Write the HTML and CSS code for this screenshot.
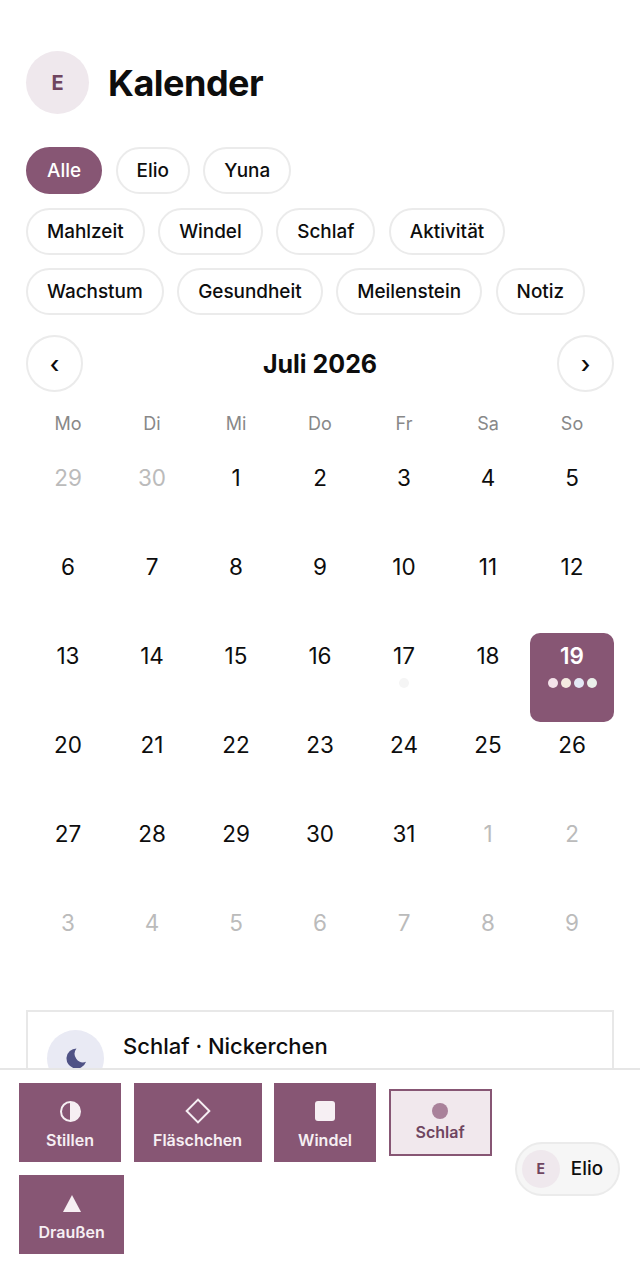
FILE: index.html
```html
<!DOCTYPE html>
<html lang="de">
<head>
    <meta charset="utf-8">
    <title>Kalender</title>
    <link rel="stylesheet" href="styles.css">
</head>
<body>
    <div class="app">
        <main class="content">
            <header class="page-header">
                <div class="avatar">E</div>
                <h1>Kalender</h1>
            </header>

            <div class="chips">
                <button class="chip active">Alle</button>
                <button class="chip">Elio</button>
                <button class="chip">Yuna</button>
            </div>
            <div class="chips">
                <button class="chip">Mahlzeit</button>
                <button class="chip">Windel</button>
                <button class="chip">Schlaf</button>
                <button class="chip">Aktivität</button>
            </div>
            <div class="chips">
                <button class="chip">Wachstum</button>
                <button class="chip">Gesundheit</button>
                <button class="chip">Meilenstein</button>
                <button class="chip">Notiz</button>
            </div>

            <div class="month-nav">
                <button class="nav-btn">‹</button>
                <h2>Juli 2026</h2>
                <button class="nav-btn">›</button>
            </div>

            <div class="weekdays">
                <span>Mo</span><span>Di</span><span>Mi</span><span>Do</span><span>Fr</span><span>Sa</span><span>So</span>
            </div>

            <div class="calendar">
                <div class="day muted">29</div>
                <div class="day muted">30</div>
                <div class="day">1</div>
                <div class="day">2</div>
                <div class="day">3</div>
                <div class="day">4</div>
                <div class="day">5</div>
                <div class="day">6</div>
                <div class="day">7</div>
                <div class="day">8</div>
                <div class="day">9</div>
                <div class="day">10</div>
                <div class="day">11</div>
                <div class="day">12</div>
                <div class="day">13</div>
                <div class="day">14</div>
                <div class="day">15</div>
                <div class="day">16</div>
                <div class="day">17<div class="dots"><i class="dot faint"></i></div></div>
                <div class="day">18</div>
                <div class="day selected">19
                    <div class="dots">
                        <i class="dot pink"></i><i class="dot sand"></i><i class="dot blue"></i><i class="dot green"></i>
                    </div>
                </div>
                <div class="day">20</div>
                <div class="day">21</div>
                <div class="day">22</div>
                <div class="day">23</div>
                <div class="day">24</div>
                <div class="day">25</div>
                <div class="day">26</div>
                <div class="day">27</div>
                <div class="day">28</div>
                <div class="day">29</div>
                <div class="day">30</div>
                <div class="day">31</div>
                <div class="day muted">1</div>
                <div class="day muted">2</div>
                <div class="day muted">3</div>
                <div class="day muted">4</div>
                <div class="day muted">5</div>
                <div class="day muted">6</div>
                <div class="day muted">7</div>
                <div class="day muted">8</div>
                <div class="day muted">9</div>
            </div>

            <section class="entry">
                <div class="entry-icon">
                    <svg width="23" height="23" viewBox="0 0 24 24"><path d="M13 1.5A10.5 10.5 0 1 0 23 15.5 9 9 0 0 1 13 1.5Z" fill="#4f5285"/></svg>
                </div>
                <div class="entry-title">Schlaf · Nickerchen</div>
            </section>
        </main>

        <footer class="quick-bar">
            <div class="tiles">
                <button class="tile">
                    <span class="tile-icon"><i class="ico-half"></i></span>
                    Stillen
                </button>
                <button class="tile">
                    <span class="tile-icon"><i class="ico-diamond"></i></span>
                    Fläschchen
                </button>
                <button class="tile">
                    <span class="tile-icon"><i class="ico-square"></i></span>
                    Windel
                </button>
                <button class="tile running">
                    <span class="tile-icon"><i class="ico-circle"></i></span>
                    Schlaf
                </button>
                <button class="tile">
                    <span class="tile-icon"><i class="ico-triangle"></i></span>
                    Draußen
                </button>
            </div>
            <button class="child-switch">
                <span class="avatar small">E</span>
                Elio
            </button>
        </footer>
    </div>
</body>
</html>
```

FILE: styles.css
```css
html, body {
    margin: 0;
    height: 100%;
    background: #fff;
    font-family: Inter, "Liberation Sans", sans-serif;
    color: #0d0d0d;
}
button {
    font-family: inherit;
    color: inherit;
    cursor: pointer;
}
.app {
    height: 100vh;
    display: flex;
    flex-direction: column;
    overflow: hidden;
}
.content {
    flex: 1;
    min-height: 0;
    overflow: hidden;
    padding: 51px 26px 0;
}
.page-header {
    display: flex;
    align-items: center;
    gap: 19px;
    margin-bottom: 33px;
}
h1 {
    margin: 0;
    font-size: 36px;
    font-weight: 700;
    letter-spacing: -0.5px;
}
.avatar {
    width: 63px;
    height: 63px;
    border-radius: 50%;
    background: #efe8ed;
    color: #6f4560;
    font-size: 20px;
    font-weight: 700;
    display: flex;
    align-items: center;
    justify-content: center;
    flex-shrink: 0;
}
.avatar.small {
    width: 38px;
    height: 38px;
    font-size: 14px;
}
.chips {
    display: flex;
    gap: 13.5px;
    margin-bottom: 13.5px;
}
.chip {
    height: 47px;
    padding: 0 19px;
    background: #fff;
    border: 2px solid #ebebeb;
    border-radius: 24px;
    font-size: 18.9px;
    font-weight: 500;
}
.chip.active {
    background: #875674;
    border-color: #875674;
    color: #fff;
}
.month-nav {
    display: flex;
    align-items: center;
    justify-content: space-between;
    margin-top: 20px;
}
.month-nav h2 {
    margin: 0;
    font-size: 25px;
    font-weight: 700;
}
.nav-btn {
    width: 57px;
    height: 57px;
    background: #fff;
    border: 2px solid #ebebeb;
    border-radius: 50%;
    font-size: 24px;
    font-weight: 500;
    padding: 2px 0 0;
}
.weekdays {
    display: grid;
    grid-template-columns: repeat(7, 1fr);
    margin-top: 21px;
    height: 22px;
    line-height: 22px;
    text-align: center;
    font-size: 18px;
    color: #888;
}
.calendar {
    display: grid;
    grid-template-columns: repeat(7, 1fr);
    grid-auto-rows: 89px;
    margin-top: 20px;
}
.day {
    padding-top: 10px;
    text-align: center;
    font-size: 22.5px;
    line-height: 26px;
    font-weight: 400;
    box-sizing: border-box;
}
.day.muted {
    color: #bbb;
}
.day.selected {
    background: #875674;
    color: #fff;
    font-weight: 600;
    border-radius: 10px;
}
.dots {
    display: flex;
    justify-content: center;
    gap: 3px;
    margin-top: 9px;
}
.dot {
    width: 10px;
    height: 10px;
    border-radius: 50%;
}
.dot.faint { background: #f5f5f5; }
.dot.pink { background: #f4e3ea; }
.dot.sand { background: #f4ebe1; }
.dot.blue { background: #e4e8f5; }
.dot.green { background: #eaf0ea; }
.entry {
    display: flex;
    gap: 19px;
    margin-top: 21px;
    padding: 18px 19px;
    border: 2px solid #e8e8e8;
}
.entry-icon {
    width: 57px;
    height: 57px;
    border-radius: 50%;
    background: #e9eaf4;
    display: flex;
    align-items: center;
    justify-content: center;
    flex-shrink: 0;
}
.entry-title {
    font-size: 22px;
    font-weight: 500;
    line-height: 30px;
    margin-top: 1px;
}
.quick-bar {
    display: flex;
    align-items: center;
    padding: 13px 20px 13px 19px;
    border-top: 2px solid #e6e6e6;
    background: #fff;
}
.tiles {
    flex: 1;
    display: flex;
    flex-wrap: wrap;
    align-items: center;
    gap: 13px 12.5px;
}
.tile {
    box-sizing: border-box;
    height: 79px;
    min-width: 102px;
    padding: 4px 19.5px 0;
    display: flex;
    flex-direction: column;
    align-items: center;
    justify-content: center;
    gap: 8px;
    background: #875674;
    border: 0;
    color: #f6eff3;
    font-size: 16px;
    line-height: 19px;
    font-weight: 600;
}
.tile.running {
    height: 67px;
    min-width: 103px;
    padding: 0 19px;
    gap: 4px;
    background: #f1e8ed;
    border: 2px solid #875674;
    color: #6f4560;
}
.tile-icon {
    width: 24px;
    height: 24px;
    display: flex;
    align-items: center;
    justify-content: center;
}
.tile.running .tile-icon {
    height: 16px;
}
.ico-half {
    box-sizing: border-box;
    width: 21px;
    height: 21px;
    border: 2px solid #f6eff3;
    border-radius: 50%;
    background: linear-gradient(90deg, transparent 50%, #f6eff3 50%);
}
.ico-diamond {
    box-sizing: border-box;
    width: 18px;
    height: 18px;
    border: 2px solid #f6eff3;
    transform: rotate(45deg);
}
.ico-square {
    width: 20px;
    height: 20px;
    border-radius: 3px;
    background: #f6eff3;
}
.ico-circle {
    width: 16px;
    height: 16px;
    border-radius: 50%;
    background: #a9819a;
}
.ico-triangle {
    width: 0;
    height: 0;
    border-left: 9px solid transparent;
    border-right: 9px solid transparent;
    border-bottom: 17px solid #f6eff3;
}
.child-switch {
    display: flex;
    align-items: center;
    gap: 11px;
    height: 54px;
    padding: 0 15px 0 5px;
    background: #f6f6f6;
    border: 2px solid #ebebeb;
    border-radius: 27px;
    font-size: 18.8px;
    font-weight: 500;
}
```
